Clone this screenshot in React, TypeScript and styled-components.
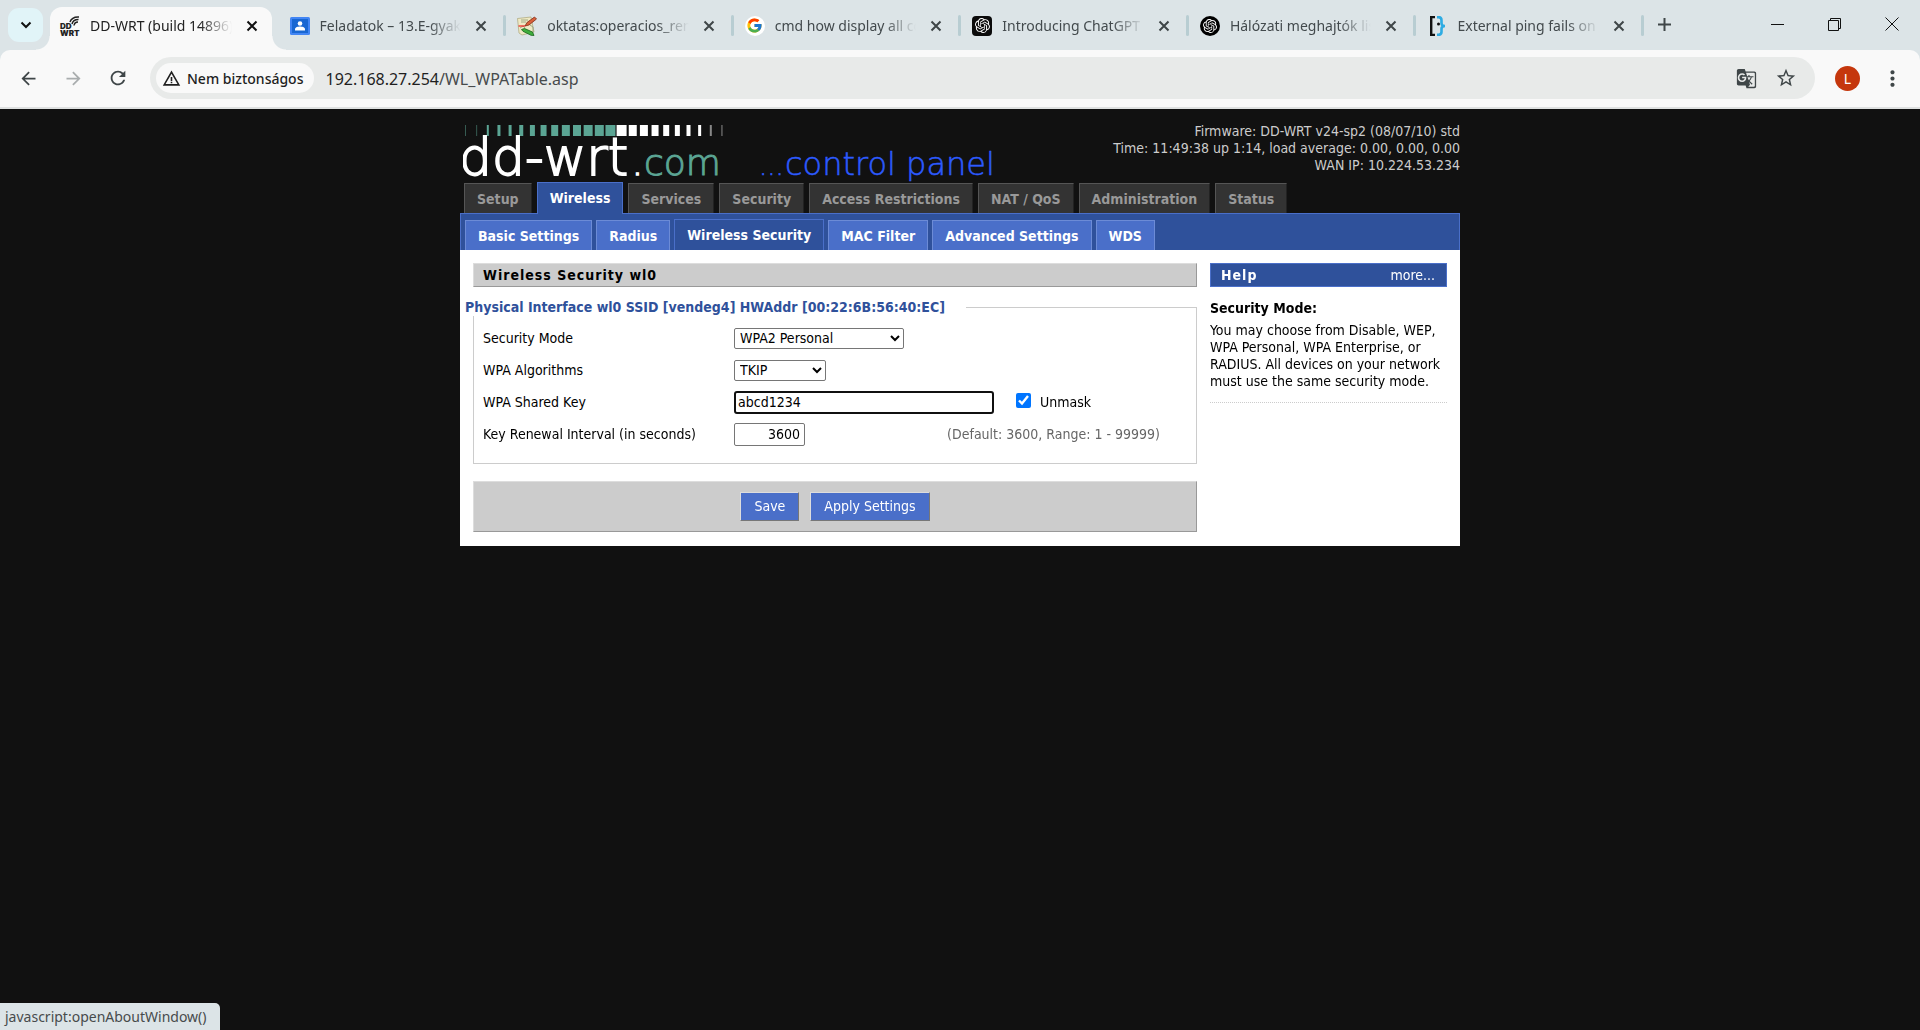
import React, { useEffect, useRef } from "react";
import styled, { createGlobalStyle, css } from "styled-components";
import { FcGoogle } from "react-icons/fc";
import { SiOpenai } from "react-icons/si";
import {
  MdArrowBack,
  MdArrowForward,
  MdGTranslate,
  MdMoreVert,
  MdRefresh,
  MdStarBorder,
  MdWarningAmber,
} from "react-icons/md";

const chromeFont = `"Noto Sans", "Open Sans", sans-serif`;
const pageFont = `"DejaVu Sans Condensed", "DejaVu Sans", sans-serif`;

const GlobalStyle = createGlobalStyle`
  *, *::before, *::after { box-sizing: border-box; }
  body { margin: 0; background: #111; }
  button, input, select { font: inherit; }
`;

const Browser = styled.div`
  min-height: 100vh;
  display: flex;
  flex-direction: column;
  font-family: ${chromeFont};
  background: #111;
`;

const IconButton = styled.button<{ $w?: number; $color?: string }>`
  display: flex;
  align-items: center;
  justify-content: center;
  flex: none;
  width: ${(p) => p.$w ?? 32}px;
  height: 34px;
  padding: 0;
  border: 0;
  background: transparent;
  color: ${(p) => p.$color ?? "#3f4648"};
`;

/* ---------- tab strip ---------- */

const TabStrip = styled.header`
  display: flex;
  height: 50px;
  padding: 7px 0 0 8px;
  background: #dce4e7;
`;

const SearchTabs = styled(IconButton)`
  width: 35px;
  margin: 1px 7px 0 0;
  border-radius: 11px;
  background: #e1f4f8;
  color: #111;
`;

const Tabs = styled.div`
  display: flex;
  flex: 0 1 1594px;
  min-width: 0;
`;

const Tab = styled.div<{ $active?: boolean; $divider?: boolean }>`
  position: relative;
  display: flex;
  flex: 1 1 0;
  align-items: center;
  min-width: 0;
  height: 43px;
  padding: 0 15px 6px 11px;
  color: #434a4d;
  ${(p) =>
    p.$divider &&
    css`
      &::after {
        content: "";
        position: absolute;
        right: 0;
        top: 8px;
        width: 3px;
        height: 21px;
        border-radius: 2px;
        background: #b8cdd2;
      }
    `}
  ${(p) =>
    p.$active &&
    css`
      padding-left: 10px;
      padding-right: 17px;
      color: #222;
      isolation: isolate;
      &::before {
        content: "";
        position: absolute;
        z-index: -1;
        inset: 0 7px 0 0;
        border-radius: 12px 12px 0 0;
        background: #f9f9f9;
      }
    `}
`;

const Flare = styled.span<{ $side: "left" | "right" }>`
  position: absolute;
  bottom: 0;
  width: 14px;
  height: 14px;
  ${(p) =>
    p.$side === "left"
      ? "left: -14px; background: radial-gradient(circle at 0 0, transparent 13px, #f9f9f9 14px);"
      : "right: -7px; background: radial-gradient(circle at 100% 0, transparent 13px, #f9f9f9 14px);"}
`;

const Favicon = styled.span<{ $bg?: string; $radius?: number; $fg?: string }>`
  display: flex;
  align-items: center;
  justify-content: center;
  flex: none;
  width: 20px;
  height: 20px;
  border-radius: ${(p) => p.$radius ?? 0}px;
  background: ${(p) => p.$bg ?? "transparent"};
  color: ${(p) => p.$fg ?? "#000"};
`;

const TabTitle = styled.span`
  flex: 1;
  min-width: 0;
  margin: 0 10px;
  overflow: hidden;
  font-size: 14px;
  line-height: 22px;
  white-space: nowrap;
  mask-image: linear-gradient(to right, #000 calc(100% - 32px), transparent);
`;

const TabClose = styled(IconButton)`
  width: 20px;
  height: 20px;
`;

const WindowControls = styled.div`
  display: flex;
  margin-left: auto;
`;

/* ---------- toolbar ---------- */

const ToolbarBack = styled.div`
  background: #dce4e7;
`;

const Toolbar = styled.div`
  display: flex;
  align-items: center;
  height: 59px;
  padding: 0 12px 1px;
  border-bottom: 2px solid #dfe1e1;
  border-radius: 10px 10px 0 0;
  background: #f9f9f9;
`;

const NavButtons = styled.nav`
  display: flex;
  gap: 13px;
  margin-right: 16px;
`;

const AddressBar = styled.div`
  display: flex;
  align-items: center;
  flex: 1;
  min-width: 0;
  height: 42px;
  padding: 0 9px 0 6px;
  border-radius: 21px;
  background: #e8eae9;
`;

const SecurityChip = styled.button`
  display: flex;
  align-items: center;
  flex: none;
  gap: 6px;
  height: 30px;
  padding: 0 11px 0 6px;
  border: 0;
  border-radius: 15px;
  background: #f9f9f9;
  color: #1f1f1f;
  font-size: 14px;
  font-weight: 500;
  white-space: nowrap;
`;

const UrlField = styled.div`
  display: flex;
  flex: 1;
  align-items: center;
  margin: 2px 0 0 11px;
  font-size: 16px;
  color: #1f1f1f;
`;

const UrlPath = styled.span`
  color: #474b4c;
`;

const Avatar = styled.button`
  flex: none;
  width: 25px;
  height: 25px;
  margin: 0 16px 0 20px;
  padding: 0;
  border: 0;
  border-radius: 50%;
  background: #c5370d;
  color: #fff;
  font-size: 14px;
  line-height: 25px;
`;

/* ---------- router page ---------- */

const Page = styled.div`
  width: 100%;
  max-width: 1000px;
  margin: 0 auto;
  font-family: ${pageFont};
  font-size: 14px;
  line-height: 17px;
  color: #000;
`;

const Masthead = styled.div`
  display: flex;
  align-items: flex-start;
  justify-content: space-between;
  height: 73px;
  padding: 14px 0 0 3px;
`;

const Brand = styled.svg`
  display: block;
  flex: none;
`;

const RouterInfo = styled.div`
  color: #ccc;
  text-align: right;
  white-space: nowrap;
`;

const MainMenu = styled.nav`
  display: flex;
  align-items: flex-end;
  gap: 5px;
  height: 31px;
  padding-left: 4px;
`;

const MenuLink = styled.a<{ $active?: boolean }>`
  height: ${(p) => (p.$active ? 32 : 30)}px;
  margin-bottom: ${(p) => (p.$active ? -1 : 0)}px;
  padding: 7px 12px 0;
  border: 1px solid ${(p) => (p.$active ? "#4a6fc9" : "#555")};
  border-right-color: ${(p) => (p.$active ? "#4a6fc9" : "#222")};
  border-bottom: 0;
  background: ${(p) => (p.$active ? "#2f519b" : "#333")};
  color: ${(p) => (p.$active ? "#fff" : "#999")};
  font-weight: bold;
  text-decoration: none;
  white-space: nowrap;
  z-index: 1;
`;

const SubMenu = styled.nav`
  display: flex;
  align-items: flex-end;
  gap: 4px;
  height: 37px;
  padding-left: 4px;
  border: 1px solid #4a6fc9;
  border-bottom: 0;
  background: #2f519b;
`;

const SubLink = styled.a<{ $active?: boolean }>`
  height: ${(p) => (p.$active ? 31 : 30)}px;
  padding: 7px 12px 0;
  border: 1px solid ${(p) => (p.$active ? "#4a6fc9" : "#6c8bd6")};
  border-bottom: 0;
  background: ${(p) => (p.$active ? "#2f519b" : "#4a6fc9")};
  color: #fff;
  font-weight: bold;
  text-decoration: none;
  white-space: nowrap;
`;

const Content = styled.div`
  display: grid;
  grid-template-columns: minmax(0, 1fr) 237px;
  gap: 13px;
  padding: 13px 13px 14px;
  background: #fff;
`;

const SectionTitle = styled.h2`
  height: 24px;
  margin: 0;
  padding: 2px 9px;
  border: 1px solid #999;
  border-top-color: #ddd;
  border-left-color: #ddd;
  background: #ccc;
  font-size: 14px;
  line-height: 18px;
  letter-spacing: 1px;
`;

const Fieldset = styled.fieldset`
  min-width: 0;
  margin: 12px 0 17px;
  padding: 6px 9px 13px;
  border: 1px solid #ccc;
`;

const Legend = styled.legend`
  margin-left: -18px;
  padding: 0 21px 0 0;
  color: #2f519b;
  font-weight: bold;
  white-space: nowrap;
`;

const Setting = styled.div`
  display: flex;
  align-items: center;
  height: 32px;
`;

const SettingLabel = styled.label`
  flex: none;
  width: 251px;
`;

const Select = styled.select<{ $w: number }>`
  width: ${(p) => p.$w}px;
  height: 21px;
  padding: 0 1px;
  border: 1px solid #767676;
  border-radius: 2px;
  background-color: #fff;
  color: #000;
`;

const TextInput = styled.input<{ $w: number; $right?: boolean; $focus?: boolean }>`
  width: ${(p) => p.$w}px;
  height: 23px;
  padding: 1px 4px;
  border: ${(p) => (p.$focus ? "2px solid #101010" : "1px solid #767676")};
  border-radius: ${(p) => (p.$focus ? 3 : 2)}px;
  outline: 0;
  background: #fff;
  color: #000;
  text-align: ${(p) => (p.$right ? "right" : "left")};
  ${(p) => p.$focus && "padding: 1px 2px;"}
`;

const CheckLabel = styled.label`
  display: flex;
  align-items: center;
  gap: 9px;
  margin-left: 22px;
`;

const Checkbox = styled.input`
  width: 15px;
  height: 15px;
  margin: 0 0 4px;
  accent-color: #0075ff;
`;

const Hint = styled.span`
  margin: 0 27px 0 auto;
  color: #666;
`;

const Actions = styled.div`
  display: flex;
  align-items: center;
  justify-content: center;
  gap: 11px;
  height: 51px;
  border: 1px solid #999;
  border-top-color: #ddd;
  border-left-color: #ddd;
  background: #ccc;
`;

const ActionButton = styled.button`
  height: 29px;
  padding: 0 13px;
  border: 1px solid #777;
  border-top-color: #ddd;
  border-left-color: #ddd;
  background: #4a6fc9;
  color: #fff;
`;

const HelpHeader = styled.div`
  display: flex;
  align-items: center;
  justify-content: space-between;
  height: 24px;
  padding: 0 11px 0 10px;
  border: 1px solid #4a6fc9;
  background: #2f519b;
  color: #fff;
`;

const HelpTitle = styled.h2`
  margin: 0;
  font-size: 14px;
  letter-spacing: 1px;
`;

const HelpLink = styled.a`
  color: #fff;
  text-decoration: none;
`;

const HelpList = styled.dl`
  margin: 13px 0 0;
  padding-bottom: 12px;
  border-bottom: 1px dotted #ccc;
`;

const HelpTerm = styled.dt`
  margin-bottom: 5px;
  font-weight: bold;
`;

const HelpText = styled.dd`
  margin: 0;
`;

const StatusBubble = styled.div`
  position: fixed;
  left: 0;
  bottom: 0;
  height: 27px;
  padding: 0 13px 0 5px;
  border-radius: 0 5px 0 0;
  background: #dce4e7;
  color: #474b4c;
  font-family: ${chromeFont};
  font-size: 14px;
  line-height: 27px;
`;

/* ---------- drawings ---------- */

const CloseGlyph = () => (
  <svg width="12" height="12" viewBox="0 0 12 12" stroke="currentColor" strokeWidth="2">
    <path d="M1.5 1.5l9 9M10.5 1.5l-9 9" />
  </svg>
);

const WaveGlyph = () => (
  <svg width="20" height="20" viewBox="0 0 20 20" overflow="visible">
    <g fill="none" stroke="#222" strokeWidth="1.5">
      <path d="M10 6Q12 .5 19 1" />
      <path d="M12 8Q13 3.300 18.500 3.400" />
      <path d="M14 9.500Q14.500 6 18 5.900" />
    </g>
    <g fill="#222" fontFamily="Inter, sans-serif" fontWeight="900" fontSize="8">
      <text x="0" y="12.500">DD</text>
      <text x="0" y="19.500">WRT</text>
    </g>
  </svg>
);

const ClassroomGlyph = () => (
  <svg width="20" height="18" viewBox="0 0 20 18">
    <rect width="20" height="18" rx="1.5" fill="#4285f4" />
    <rect x="2" y="2" width="16" height="14" fill="#1967d2" />
    <circle cx="10" cy="6.500" r="2.300" fill="#fff" />
    <path d="M5 13.500v-1.300c0-2 3-2.700 5-2.700s5 .7 5 2.700v1.300z" fill="#fff" />
  </svg>
);

const WikiGlyph = () => (
  <svg width="20" height="20" viewBox="0 0 20 20">
    <path d="M.5 2.500L14 1l3 15-12 3-3-2z" fill="#efe9c4" stroke="#aaa578" strokeWidth=".7" />
    <path d="M4 4h7M4 6h5M3 12l3-2 2 2M13 9l3 2v5" stroke="#8d9b78" strokeWidth=".8" fill="none" />
    <path d="M8 10l2-3.500L17.500 1l2 2L12 9z" fill="#d9623b" stroke="#7d2a15" strokeWidth=".8" />
    <path d="M1.500 10H8" stroke="#e22" strokeWidth="1.200" />
    <path d="M4.500 13.500l3-1 8 3.500 1.500 3.500-3-.2-8-4z" fill="#3fae3c" stroke="#17651a" strokeWidth=".8" />
  </svg>
);

const SuperUserGlyph = () => (
  <svg width="20" height="20" viewBox="0 0 20 20" fill="none">
    <path d="M8 1H4.200v18H8" stroke="#111" strokeWidth="2.400" />
    <path d="M10 1.200h1.500q3 0 3 3v3q0 2.800 3.500 2.800q-3.500 0-3.500 2.800v3q0 3-3 3H10" stroke="#2eace3" strokeWidth="2.600" />
    <circle cx="11.500" cy="8" r="1.500" fill="#111" />
  </svg>
);

const barWidths = [1, 1, 2, 3, 3, 4, 5, 6, 7, 8, 8, 9, 9, 10, 10, 8, 8, 7, 6, 5, 4, 3, 2, 1];

const DdWrtBrand = () => (
  <Brand width="540" height="59" viewBox="0 0 540 59" role="img" aria-label="dd-wrt.com control panel">
    {barWidths.map((w, i) => (
      <rect
        key={i}
        x={2.5 + i * 11.15 - w / 2}
        y="2"
        width={w}
        height="11"
        fill={i < 14 ? "#5ba594" : "#fff"}
        opacity={i < 2 || i > 21 ? 0.5 : 1}
      />
    ))}
    <g fontFamily="'DejaVu Sans', sans-serif" fontWeight="200">
      <text x="-4" y="52" fontSize="52" fill="#fff" stroke="#fff" strokeWidth="1.800">
        dd-wrt
      </text>
      <text x="169" y="52" fontSize="34" fill="#fff" stroke="#fff" strokeWidth="1.500">
        .
      </text>
      <text x="181" y="52" fontSize="36" fill="#5ba594" stroke="#5ba594" strokeWidth="1">
        com
      </text>
      <text x="296" y="52" fontSize="26" fill="#2d5bff" stroke="#2d5bff" strokeWidth=".5">
        ...
      </text>
      <text x="322" y="52" fontSize="32" fill="#2d5bff" stroke="#2d5bff" strokeWidth=".5">
        control panel
      </text>
    </g>
  </Brand>
);

/* ---------- data ---------- */

const browserTabs = [
  { title: "DD-WRT (build 14896)", icon: <Favicon><WaveGlyph /></Favicon> },
  { title: "Feladatok – 13.E-gyakorlat", icon: <Favicon><ClassroomGlyph /></Favicon> },
  { title: "oktatas:operacios_rendszer", icon: <Favicon><WikiGlyph /></Favicon> },
  { title: "cmd how display all connect", icon: <Favicon $bg="#fff" $radius={10}><FcGoogle size={17} /></Favicon> },
  { title: "Introducing ChatGPT", icon: <Favicon $bg="#0b0b0b" $fg="#fff" $radius={4}><SiOpenai size={15} /></Favicon> },
  { title: "Hálózati meghajtók listázása", icon: <Favicon $bg="#000" $fg="#fff" $radius={10}><SiOpenai size={14} /></Favicon> },
  { title: "External ping fails on local", icon: <Favicon><SuperUserGlyph /></Favicon> },
];

const menu = ["Setup", "Wireless", "Services", "Security", "Access Restrictions", "NAT / QoS", "Administration", "Status"];
const subMenu = ["Basic Settings", "Radius", "Wireless Security", "MAC Filter", "Advanced Settings", "WDS"];

export default function App() {
  const keyInput = useRef<HTMLInputElement>(null);

  useEffect(() => {
    keyInput.current?.focus();
    keyInput.current?.setSelectionRange(0, 0);
  }, []);

  return (
    <Browser>
      <GlobalStyle />
      <TabStrip>
        <SearchTabs aria-label="Search tabs">
          <svg width="12" height="8" viewBox="0 0 12 8" fill="none" stroke="currentColor" strokeWidth="2">
            <path d="M1.500 1.500L6 6l4.500-4.500" />
          </svg>
        </SearchTabs>
        <Tabs>
          {browserTabs.map((tab, i) => (
            <Tab key={tab.title} $active={i === 0} $divider={i > 0}>
              {i === 0 && <Flare $side="left" />}
              {i === 0 && <Flare $side="right" />}
              {tab.icon}
              <TabTitle>{tab.title}</TabTitle>
              <TabClose aria-label="Close tab" $color={i === 0 ? "#111" : "#3f4648"}>
                <CloseGlyph />
              </TabClose>
            </Tab>
          ))}
        </Tabs>
        <IconButton $w={40} aria-label="New tab">
          <svg width="13" height="13" viewBox="0 0 13 13" stroke="currentColor" strokeWidth="2">
            <path d="M6.500 0v13M0 6.500h13" />
          </svg>
        </IconButton>
        <WindowControls>
          <IconButton $w={57} $color="#111" aria-label="Minimize">
            <svg width="13" height="13" viewBox="0 0 13 13" stroke="currentColor">
              <path d="M0 6.500h13" />
            </svg>
          </IconButton>
          <IconButton $w={57} $color="#111" aria-label="Restore">
            <svg width="13" height="13" viewBox="0 0 13 13" fill="none" stroke="currentColor">
              <path d="M.5 2.500h10v10h-10zM2.500 2.500v-2h10v10h-2" />
            </svg>
          </IconButton>
          <IconButton $w={57} $color="#111" aria-label="Close window">
            <svg width="14" height="14" viewBox="0 0 14 14" stroke="currentColor">
              <path d="M.5.5l13 13M13.500.5l-13 13" />
            </svg>
          </IconButton>
        </WindowControls>
      </TabStrip>
      <ToolbarBack>
        <Toolbar>
          <NavButtons aria-label="History">
            <IconButton aria-label="Back"><MdArrowBack size={21} /></IconButton>
            <IconButton aria-label="Forward" $color="#a9adae"><MdArrowForward size={21} /></IconButton>
            <IconButton aria-label="Reload"><MdRefresh size={22} /></IconButton>
          </NavButtons>
          <AddressBar>
            <SecurityChip><MdWarningAmber size={19} />Nem biztonságos</SecurityChip>
            <UrlField>
              192.168.27.254<UrlPath>/WL_WPATable.asp</UrlPath>
            </UrlField>
            <IconButton $w={40} aria-label="Translate"><MdGTranslate size={21} /></IconButton>
            <IconButton $w={40} aria-label="Bookmark"><MdStarBorder size={22} /></IconButton>
          </AddressBar>
          <Avatar>L</Avatar>
          <IconButton aria-label="Menu"><MdMoreVert size={25} /></IconButton>
        </Toolbar>
      </ToolbarBack>

      <Page>
        <Masthead>
          <DdWrtBrand />
          <RouterInfo>
            <div>Firmware: DD-WRT v24-sp2 (08/07/10) std</div>
            <div>Time: 11:49:38 up 1:14, load average: 0.00, 0.00, 0.00</div>
            <div>WAN IP: 10.224.53.234</div>
          </RouterInfo>
        </Masthead>
        <MainMenu>
          {menu.map((name) => (
            <MenuLink key={name} href="#" $active={name === "Wireless"}>{name}</MenuLink>
          ))}
        </MainMenu>
        <SubMenu>
          {subMenu.map((name) => (
            <SubLink key={name} href="#" $active={name === "Wireless Security"}>{name}</SubLink>
          ))}
        </SubMenu>
        <Content>
          <main>
            <SectionTitle>Wireless Security wl0</SectionTitle>
            <Fieldset>
              <Legend>Physical Interface wl0 SSID [vendeg4] HWAddr [00:22:6B:56:40:EC]</Legend>
              <Setting>
                <SettingLabel htmlFor="mode">Security Mode</SettingLabel>
                <Select id="mode" $w={170}><option>WPA2 Personal</option></Select>
              </Setting>
              <Setting>
                <SettingLabel htmlFor="algorithm">WPA Algorithms</SettingLabel>
                <Select id="algorithm" $w={92}><option>TKIP</option></Select>
              </Setting>
              <Setting>
                <SettingLabel htmlFor="key">WPA Shared Key</SettingLabel>
                <TextInput id="key" ref={keyInput} $w={260} $focus defaultValue="abcd1234" />
                <CheckLabel><Checkbox type="checkbox" defaultChecked />Unmask</CheckLabel>
              </Setting>
              <Setting>
                <SettingLabel htmlFor="interval">Key Renewal Interval (in seconds)</SettingLabel>
                <TextInput id="interval" $w={71} $right defaultValue="3600" />
                <Hint>(Default: 3600, Range: 1 - 99999)</Hint>
              </Setting>
            </Fieldset>
            <Actions>
              <ActionButton>Save</ActionButton>
              <ActionButton>Apply Settings</ActionButton>
            </Actions>
          </main>
          <aside>
            <HelpHeader>
              <HelpTitle>Help</HelpTitle>
              <HelpLink href="#">more...</HelpLink>
            </HelpHeader>
            <HelpList>
              <HelpTerm>Security Mode:</HelpTerm>
              <HelpText>
                You may choose from Disable, WEP, WPA Personal, WPA Enterprise, or RADIUS. All devices on your network
                must use the same security mode.
              </HelpText>
            </HelpList>
          </aside>
        </Content>
      </Page>
      <StatusBubble>javascript:openAboutWindow()</StatusBubble>
    </Browser>
  );
}
